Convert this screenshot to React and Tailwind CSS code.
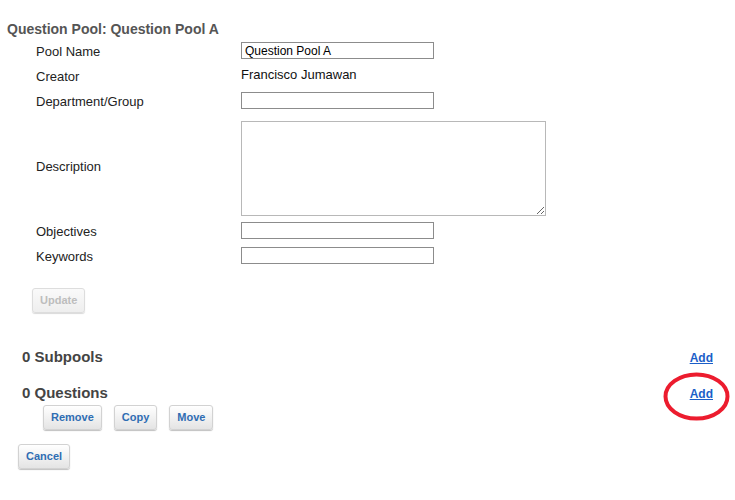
import React from "react";

function Btn({ children, disabled, className = "" }) {
  return (
    <button
      type="button"
      className={
        "h-[25px] px-[7px] rounded-[3px] border text-[11px] font-bold leading-none " +
        (disabled
          ? "border-[#dddddd] bg-gradient-to-b from-[#fafafa] to-[#eeeeee] text-[#bdbdbd] shadow-[0_1px_1px_rgba(0,0,0,0.15)] "
          : "border-[#d2d2d2] bg-gradient-to-b from-white to-[#e4e4e4] text-[#2f6db3] shadow-[0_1px_1px_rgba(0,0,0,0.25)] ") +
        className
      }
    >
      {children}
    </button>
  );
}

function Row({ label, children, h = "h-[25px]" }) {
  return (
    <div className={"flex items-center " + h}>
      <div className="w-[205px] mt-[3px] text-[13px] leading-[16px] text-[#222]">{label}</div>
      {children}
    </div>
  );
}

function Input({ value = "" }) {
  return (
    <input
      readOnly
      value={value}
      className="w-[193px] h-[17px] border border-[#8c8c8c] px-[3px] text-[12px] leading-[15px] text-black outline-none"
    />
  );
}

export default function App() {
  return (
    <div className="relative w-[735px] h-[500px] bg-white font-['Liberation_Sans',Arial,sans-serif]">
      <div className="pl-[7px] pt-[21px] text-[14px] leading-[16px] font-bold text-[#555]">
        Question Pool: Question Pool A
      </div>

      <div className="pl-[36px] mt-[1px] flex flex-col">
        <Row label="Pool Name">
          <Input value="Question Pool A" />
        </Row>
        <Row label="Creator">
          <span className="text-[13px] leading-[16px] text-[#111] -mt-[1px]">Francisco Jumawan</span>
        </Row>
        <Row label="Department/Group">
          <Input />
        </Row>
        <Row label="Description" h="h-[105px]">
          <textarea
            readOnly
            className="w-[305px] h-[95px] mt-[5px] border border-[#b8b8b8] outline-none"
          />
        </Row>
        <Row label="Objectives">
          <Input />
        </Row>
        <Row label="Keywords">
          <Input />
        </Row>
      </div>

      <div className="pl-[32px] mt-[20px] flex">
        <Btn disabled>Update</Btn>
      </div>

      <div className="px-[22px] mt-[35px]">
        <div className="flex justify-between items-baseline">
          <span className="text-[15px] leading-[18px] font-bold text-[#444]">0 Subpools</span>
          <a href="#" className="text-[12px] font-bold underline text-[#1b5ec8]">Add</a>
        </div>
        <div className="flex justify-between items-baseline mt-[17px]">
          <span className="text-[15px] leading-[18px] font-bold text-[#444]">0 Questions</span>
          <a href="#" className="text-[12px] font-bold underline text-[#1b5ec8]">Add</a>
        </div>
        <div className="flex gap-[12px] pl-[21px] mt-[2px]">
          <Btn>Remove</Btn>
          <Btn>Copy</Btn>
          <Btn>Move</Btn>
        </div>
      </div>

      <div className="pl-[18px] mt-[14px] flex">
        <Btn>Cancel</Btn>
      </div>

      <svg
        className="absolute left-[663px] top-[372px]"
        width="67"
        height="49"
        viewBox="0 0 67 49"
      >
        <ellipse cx="33.5" cy="24.5" rx="31" ry="22" fill="none" stroke="#ec1c2e" strokeWidth="4" />
      </svg>
    </div>
  );
}
